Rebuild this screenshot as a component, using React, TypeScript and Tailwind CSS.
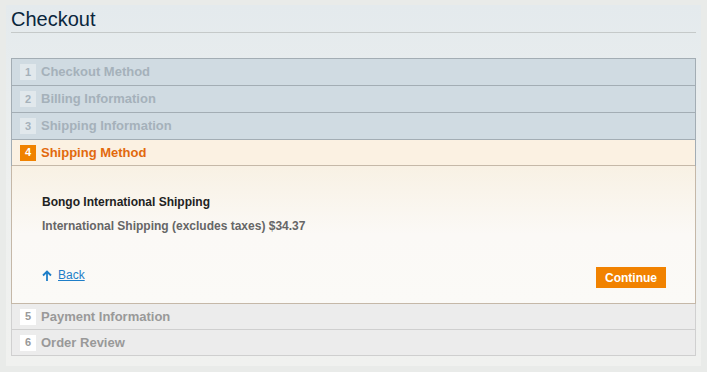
import { JSX } from 'react';

interface StepProps {
	num: number;
	title: string;
	variant: 'done' | 'active' | 'todo';
}

const Step = ({ num, title, variant }: StepProps): JSX.Element => {
	const rowCls =
		variant === 'done'
			? 'h-[27px] bg-[#d0dbe2] border-[#a3adb4] text-[#a5b1ba]'
			: variant === 'active'
				? 'h-[26px] bg-[#fbf1e2] border-[#c5b8a8] text-[#e2690d]'
				: 'h-[26px] bg-[#ececec] border-[#cfcfcf] text-[#999999]';
	const numCls =
		variant === 'done'
			? 'bg-[#e1e8ec] text-[#a5b1ba]'
			: variant === 'active'
				? 'bg-[#f08200] text-white'
				: 'bg-white text-[#999999]';

	return (
		<div className={`flex items-center border-b pl-[8px] ${rowCls}`}>
			<span
				className={`mr-[5px] flex h-[16px] w-[16px] items-center justify-center text-[11px] font-bold ${numCls}`}
			>
				{num}
			</span>
			<span className="text-[13px] font-bold">{title}</span>
		</div>
	);
};

export default function App(): JSX.Element {
	return (
		<div
			className="h-[372px] w-[707px] bg-[#e9ebe9] px-[6px] pt-[5px] pb-[6px]"
			style={{ fontFamily: '"Liberation Sans", Arial, sans-serif' }}
		>
			<div className="h-full bg-gradient-to-b from-[#e4eaed] via-[#eef0ef] to-[#f0f1ef] px-[5px] pt-[3px]">
				{/* Title */}
				<div className="border-b border-[#c5c9c9] pb-[1px]">
					<h1 className="text-[20px] leading-[23px] text-[#0a263c]">Checkout</h1>
				</div>

				{/* Steps */}
				<div className="mt-[25px] w-[685px] border border-b-0 border-[#a3adb4]">
					<Step num={1} title="Checkout Method" variant="done" />
					<Step num={2} title="Billing Information" variant="done" />
					<Step num={3} title="Shipping Information" variant="done" />
					<Step num={4} title="Shipping Method" variant="active" />

					{/* Active content */}
					<div className="-mx-px border-x border-b border-[#c5b8a8] bg-gradient-to-b from-[#f8f1e4] via-[#fbf9f6] to-[#fbfaf7] px-[30px] pt-[29px] pb-[15px]">
						<div className="text-[12px] font-bold text-[#222222] leading-[15px]">
							Bongo International Shipping
						</div>
						<div className="mt-[9px] text-[12px] font-bold text-[#666666] leading-[15px]">
							International Shipping (excludes taxes) $34.37
						</div>
						<div className="mt-[33px] flex items-start justify-between">
							<div className="mt-[1px] flex h-[15px] items-center gap-[6px]">
								<svg width="10" height="12" viewBox="0 0 10 12" fill="none">
									<path d="M5 11V2M1 5.5L5 1.5L9 5.5" stroke="#1e7ec8" strokeWidth="1.8" />
								</svg>
								<a className="text-[12px] leading-[15px] text-[#1e7ec8] underline" href="#">
									Back
								</a>
							</div>
							<button className="mr-[-1px] h-[21px] bg-[#f18200] px-[9px] text-[12px] font-bold text-white">
								Continue
							</button>
						</div>
					</div>

					<div className="-mx-px border-x border-[#d0d0d0]">
						<Step num={5} title="Payment Information" variant="todo" />
						<Step num={6} title="Order Review" variant="todo" />
					</div>
				</div>
			</div>
		</div>
	);
}
